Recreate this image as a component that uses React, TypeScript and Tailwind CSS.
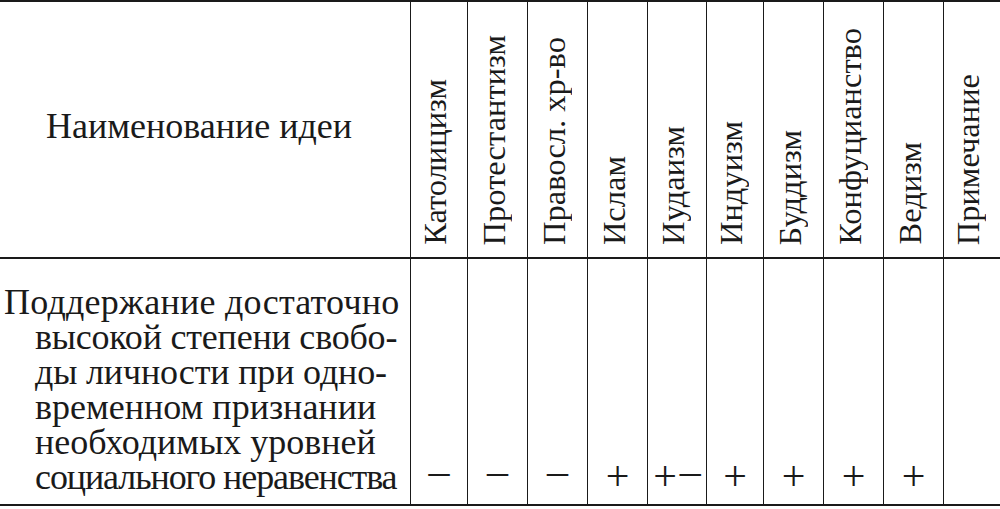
import React from 'react';

const cols: { h: string; v: string }[] = [
  { h: 'Католицизм', v: '-' },
  { h: 'Протестантизм', v: '-' },
  { h: 'Правосл. хр-во', v: '-' },
  { h: 'Ислам', v: '+' },
  { h: 'Иудаизм', v: '+-' },
  { h: 'Индуизм', v: '+' },
  { h: 'Буддизм', v: '+' },
  { h: 'Конфуцианство', v: '+' },
  { h: 'Ведизм', v: '+' },
  { h: 'Примечание', v: '' },
];

const grid = 'grid grid-cols-[410px_57px_60px_60px_60px_59px_57px_60px_60px_60px_57px]';

function Sym({ v }: { v: string }) {
  return (
    <>
      {v.split('').map((ch, i) =>
        ch === '-' ? (
          <span key={i} className={`align-[5px] ${i > 0 ? 'ml-[3px]' : ''}`}>–</span>
        ) : (
          <span key={i}>{ch}</span>
        )
      )}
    </>
  );
}

export default function App() {
  return (
    <div className="w-[1000px] h-[509px] bg-white text-[#1a1a1a] font-['Liberation_Serif',serif] overflow-hidden">
      <div className="border-t-2 border-b-2 border-[#1a1a1a]">
        <div className={`${grid} h-[257px] border-b-2 border-[#1a1a1a]`}>
          <div className="flex items-center justify-center pr-[12px] pb-[8px] text-[36px] leading-[40px] whitespace-nowrap">
            Наименование идеи
          </div>
          {cols.map((c) => (
            <div key={c.h} className="border-l border-[#1a1a1a] flex items-end justify-center pb-[12px] pr-[8px]">
              <span className="[writing-mode:vertical-rl] rotate-180 text-[32.5px] leading-[32px] whitespace-nowrap">
                {c.h}
              </span>
            </div>
          ))}
        </div>
        <div className={`${grid} h-[245px]`}>
          <div className="flex flex-col justify-end pb-[9px] text-[36px] leading-[35px] whitespace-nowrap">
            <div className="pl-[4px] tracking-[0.25px]">Поддержание достаточно</div>
            <div className="pl-[35px] tracking-[-0.2px]">высокой степени свобо-</div>
            <div className="pl-[35px] tracking-[-0.15px]">ды личности при одно-</div>
            <div className="pl-[35px]">временном признании</div>
            <div className="pl-[35px]">необходимых уровней</div>
            <div className="pl-[35px] tracking-[-1.1px]">социального неравенства</div>
          </div>
          {cols.map((c) => (
            <div key={c.h} className="border-l border-[#1a1a1a] flex items-end justify-center pb-[10px] text-[42px] leading-[35px] whitespace-nowrap">
              <div>
                <Sym v={c.v} />
              </div>
            </div>
          ))}
        </div>
      </div>
    </div>
  );
}
